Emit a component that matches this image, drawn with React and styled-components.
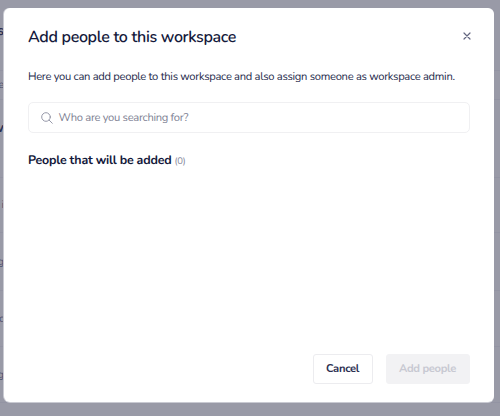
import React from "react";
import styled, { createGlobalStyle } from "styled-components";

const Global = createGlobalStyle`
  *, *::before, *::after { box-sizing: border-box; }
  body { margin: 0; background: #999aa7; font-family: "Nunito", "Lato", sans-serif; color: #14193b; overflow: hidden; text-rendering: geometricPrecision; }
`;

const Page = styled.div`
  position: relative;
  width: 500px;
  height: 416px;
  overflow: hidden;
  background: #999aa7;
`;

const PageRow = styled.div`
  display: flex;
  align-items: center;
  height: ${(p) => p.$h}px;
  border-bottom: 1px solid ${(p) => (p.$plain ? "transparent" : "#9394a3")};
`;

const PageText = styled.span`
  display: flex;
  justify-content: flex-end;
  width: 4px;
  font-size: ${(p) => (p.$strong ? 14 : 11)}px;
  font-weight: ${(p) => (p.$strong ? 700 : 400)};
  line-height: 18px;
  color: ${(p) => (p.$strong ? "#2b2f51" : "#4f516e")};
`;

const Modal = styled.section`
  position: absolute;
  left: 4px;
  top: 8px;
  width: 490px;
  height: 394px;
  padding: 18px 24px 18px;
  border-radius: 6px;
  background: #fff;
  box-shadow: -1px 0 0 #c9cad2, 0 1px 0 #c9cad2;
  display: flex;
  flex-direction: column;
`;

const Header = styled.header`
  display: flex;
  align-items: center;
  justify-content: space-between;
  height: 22px;
`;

const Title = styled.h1`
  margin: 0;
  font-size: 16px;
  line-height: 22px;
  font-weight: 600;
  letter-spacing: -0.33px;
  white-space: nowrap;
`;

const CloseButton = styled.button`
  display: flex;
  padding: 0;
  margin: -2px -0.5px 0 0;
  border: 0;
  background: none;
  color: #62657f;
`;

const Description = styled.p`
  margin: 20px 0 0;
  font-size: 11.2px;
  line-height: 17px;
  letter-spacing: -0.3px;
  white-space: nowrap;
  color: #252a4b;
`;

const SearchField = styled.label`
  display: flex;
  align-items: center;
  gap: 5.5px;
  width: 442px;
  height: 31px;
  margin-top: 17px;
  padding: 0 12px;
  border: 1.5px solid #f0f0f2;
  border-radius: 5px;
  color: #8b8d9f;
`;

const Placeholder = styled.span`
  font-size: 11.2px;
  line-height: 16px;
  letter-spacing: -0.31px;
  white-space: nowrap;
  color: #7d7f93;
`;

const ListHeading = styled.h2`
  display: flex;
  align-items: baseline;
  gap: 3px;
  margin: 19px 0 0;
  font-size: 12.4px;
  line-height: 18px;
  font-weight: 700;
  letter-spacing: -0.2px;
`;

const Count = styled.span`
  font-size: 9.5px;
  font-weight: 400;
  color: #85879a;
`;

const Footer = styled.footer`
  display: flex;
  justify-content: flex-end;
  gap: 13px;
  margin-top: auto;
`;

const Button = styled.button`
  width: ${(p) => (p.$muted ? 84 : 60)}px;
  height: 30px;
  padding: 0 1px 0 0;
  border: 1px solid ${(p) => (p.$muted ? "#f2f2f4" : "#ececef")};
  border-radius: 3px;
  background: ${(p) => (p.$muted ? "#f2f2f4" : "#fff")};
  color: ${(p) => (p.$muted ? "#c8c9d2" : "#2b2f51")};
  font-family: inherit;
  font-size: 11.2px;
  font-weight: 700;
  line-height: 16px;
  letter-spacing: -0.32px;
  text-rendering: inherit;
`;

const rows = [
  { text: "s", h: 62, strong: true, plain: true },
  { h: 9 },
  { text: "e", h: 29 },
  { text: "w", h: 57, strong: true, plain: true },
  { h: 21 },
  { text: "i", h: 55 },
  { text: "g", h: 58 },
  { text: "c", h: 56 },
  { text: "g", h: 56 },
];

export default function App() {
  return (
    <>
      <Global />
      <Page>
        {rows.map((r, i) => (
          <PageRow key={i} $h={r.h} $plain={r.plain}>
            {r.text && <PageText $strong={r.strong}>{r.text}</PageText>}
          </PageRow>
        ))}
        <Modal role="dialog" aria-modal="true">
          <Header>
            <Title>Add people to this workspace</Title>
            <CloseButton aria-label="Close">
              <svg width="8" height="8" viewBox="0 0 8 8" fill="none" stroke="currentColor" strokeWidth="1.2" strokeLinecap="round">
                <path d="M1 1l6 6M7 1l-6 6" />
              </svg>
            </CloseButton>
          </Header>
          <Description>
            Here you can add people to this workspace and also assign someone as workspace admin.
          </Description>
          <SearchField>
            <svg width="12" height="12" viewBox="0 0 12 12" fill="none" stroke="currentColor" strokeWidth="0.9" strokeLinecap="round">
              <circle cx="5" cy="5" r="4.3" />
              <path d="M8.2 8.2l3.1 3.1" />
            </svg>
            <Placeholder>Who are you searching for?</Placeholder>
          </SearchField>
          <ListHeading>
            <span>People that will be added</span>
            <Count>(0)</Count>
          </ListHeading>
          <Footer>
            <Button>Cancel</Button>
            <Button $muted disabled>Add people</Button>
          </Footer>
        </Modal>
      </Page>
    </>
  );
}
